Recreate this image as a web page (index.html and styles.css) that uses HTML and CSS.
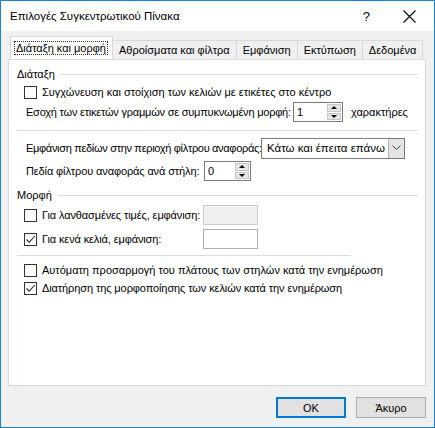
FILE: index.html
```html
<!DOCTYPE html>
<html lang="el">
<head>
  <meta charset="UTF-8" />
  <title>Επιλογές Συγκεντρωτικού Πίνακα</title>
  <link rel="stylesheet" href="styles.css">
</head>
<body>
  <div class="dialog">
    <div class="titlebar">
      <span class="title">Επιλογές Συγκεντρωτικού Πίνακα</span>
      <span class="help">?</span>
      <svg class="close" width="13" height="13" viewBox="0 0 13 13">
        <path d="M0.5 0.5 L12.5 12.5 M12.5 0.5 L0.5 12.5" stroke="#000" stroke-width="1.1" fill="none"/>
      </svg>
    </div>

    <div class="content">
      <div class="tabs">
        <div class="tab active"><span class="focus">Διάταξη και μορφή</span></div>
        <div class="tab">Αθροίσματα και φίλτρα</div>
        <div class="tab">Εμφάνιση</div>
        <div class="tab">Εκτύπωση</div>
        <div class="tab">Δεδομένα</div>
      </div>

      <div class="panel">
        <div class="group-title">Διάταξη</div>

        <label class="check-row">
          <span class="box"></span>
          <span>Συγχώνευση και στοίχιση των κελιών με ετικέτες στο κέντρο</span>
        </label>

        <div class="row">
          <span class="lbl lbl-indent">Εσοχή των ετικετών γραμμών σε συμπυκνωμένη μορφή:</span>
          <div class="spin">
            <span class="spin-value">1</span>
            <div class="spin-btns">
              <span class="arrow-up"></span>
              <span class="arrow-down"></span>
            </div>
          </div>
          <span class="after">χαρακτήρες</span>
        </div>

        <div class="sep"></div>

        <div class="row row-filter">
          <span class="lbl lbl-filter">Εμφάνιση πεδίων στην περιοχή φίλτρου αναφοράς:</span>
          <div class="select">
            <span class="select-value">Κάτω και έπειτα επάνω</span>
            <span class="select-btn">
              <svg width="9" height="6" viewBox="0 0 9 6"><path d="M0.5 0.5 L4.5 4.5 L8.5 0.5" stroke="#444" fill="none"/></svg>
            </span>
          </div>
        </div>

        <div class="row row-columns">
          <span class="lbl lbl-columns">Πεδία φίλτρου αναφοράς ανά στήλη:</span>
          <div class="spin spin-short">
            <span class="spin-value">0</span>
            <div class="spin-btns">
              <span class="arrow-up"></span>
              <span class="arrow-down"></span>
            </div>
          </div>
        </div>

        <div class="group-title group-format">Μορφή</div>

        <div class="row row-check">
          <label class="check">
            <span class="box"></span>
            <span class="lbl-check">Για λανθασμένες τιμές, εμφάνιση:</span>
          </label>
          <span class="textbox disabled"></span>
        </div>

        <div class="row row-check row-empty">
          <label class="check">
            <span class="box">
              <svg width="11" height="11" viewBox="0 0 11 11"><path d="M1.5 5.5 L4.2 8.3 L9.8 2" stroke="#222" stroke-width="1.1" fill="none"/></svg>
            </span>
            <span class="lbl-check">Για κενά κελιά, εμφάνιση:</span>
          </label>
          <span class="textbox"></span>
        </div>

        <div class="sep sep-short"></div>

        <label class="check-row check-auto">
          <span class="box"></span>
          <span>Αυτόματη προσαρμογή του πλάτους των στηλών κατά την ενημέρωση</span>
        </label>
        <label class="check-row">
          <span class="box">
            <svg width="11" height="11" viewBox="0 0 11 11"><path d="M1.5 5.5 L4.2 8.3 L9.8 2" stroke="#222" stroke-width="1.1" fill="none"/></svg>
          </span>
          <span class="tight">Διατήρηση της μορφοποίησης των κελιών κατά την ενημέρωση</span>
        </label>
      </div>

      <div class="buttons">
        <button class="btn btn-default">OK</button>
        <button class="btn">Άκυρο</button>
      </div>
    </div>
  </div>
</body>
</html>
```

FILE: styles.css
```css
body {
  margin: 0;
  font-family: "Liberation Sans", Arial, sans-serif;
  font-size: 11px;
  color: #000;
}
.dialog {
  width: 435px;
  height: 428px;
  box-sizing: border-box;
  border: 1px solid #1883d7;
  background-color: #f0f0f0;
  display: flex;
  flex-direction: column;
}
.titlebar {
  height: 30px;
  background-color: #fff;
  display: flex;
  align-items: center;
  padding-left: 9px;
}
.title {
  flex: 1;
  font-size: 11.5px;
}
.help {
  font-size: 13px;
  margin-right: 33px;
}
.close {
  margin-right: 18px;
}
.content {
  flex: 1;
  padding: 6px 8px 0 7px;
}

/* tab strip */
.tabs {
  display: flex;
  align-items: flex-end;
  height: 22px;
  padding-left: 2px;
  position: relative;
  z-index: 1;
  white-space: nowrap;
}
.tab {
  height: 18px;
  line-height: 18px;
  padding: 0 6px;
  border: 1px solid #d9d9d9;
  border-bottom: none;
  border-left: none;
  background-color: #f0f0f0;
}
.tab.active {
  height: 22px;
  line-height: 22px;
  border-left: 1px solid #d9d9d9;
  background-color: #fff;
  padding: 0 4px 0 3px;
}
.focus {
  border: 1px dotted #333;
  padding: 0 1px;
  line-height: 12px;
  display: inline-block;
}

.panel {
  height: 327px;
  box-sizing: border-box;
  background-color: #fff;
  border: 1px solid #d9d9d9;
  padding: 5px 7px 0 8px;
  white-space: nowrap;
}
.group-title {
  height: 18px;
  display: flex;
  align-items: center;
}
.group-title::after {
  content: "";
  flex: 1;
  height: 1px;
  background-color: #dcdcdc;
  margin-left: 6px;
}
.group-format {
  margin-top: 4px;
}
.sep {
  height: 1px;
  background-color: #dcdcdc;
  margin-top: 7px;
}
.sep-short {
  width: 334px;
  margin-top: 5px;
}

/* checkboxes */
.check-row,
.check {
  display: flex;
  align-items: center;
}
.check-row {
  height: 18px;
  padding-left: 7px;
}
.check-auto {
  margin-top: 5px;
}
.check {
  padding-left: 7px;
}
.box {
  width: 11px;
  height: 11px;
  border: 1px solid #333;
  background-color: #fff;
  margin-right: 5px;
  display: flex;
}
.tight {
  letter-spacing: -0.1px;
}

/* label + control rows */
.row {
  height: 22px;
  display: flex;
  align-items: center;
  padding-left: 9px;
}
.row-filter {
  margin-top: 6px;
}
.row-columns {
  margin-top: 1px;
}
.row-check {
  padding-left: 0;
}
.row-empty {
  margin-top: 2px;
}
.lbl-indent {
  width: 267px;
  letter-spacing: -0.22px;
}
.lbl-filter {
  width: 235px;
  letter-spacing: -0.32px;
}
.lbl-columns {
  width: 178px;
  letter-spacing: -0.12px;
}
.lbl-check {
  width: 161px;
  letter-spacing: -0.12px;
}
.after {
  margin-left: 8px;
}

.spin {
  width: 50px;
  height: 20px;
  box-sizing: border-box;
  border: 1px solid #7a7a7a;
  display: flex;
}
.spin-short {
  width: 47px;
}
.spin-value {
  flex: 1;
  padding-left: 3px;
  line-height: 18px;
}
.spin-btns {
  width: 14px;
  display: flex;
  flex-direction: column;
  gap: 1px;
  padding: 1px 1px 1px 0;
}
.spin-btns span {
  flex: 1;
  background-color: #e5e5e5;
  border: 1px solid #c6c6c6;
  display: flex;
  align-items: center;
  justify-content: center;
}
.arrow-up::before,
.arrow-down::before {
  content: "";
  border-left: 3px solid transparent;
  border-right: 3px solid transparent;
}
.arrow-up::before {
  border-bottom: 3px solid #000;
}
.arrow-down::before {
  border-top: 3px solid #000;
}

.select {
  width: 144px;
  height: 21px;
  box-sizing: border-box;
  border: 1px solid #7a7a7a;
  display: flex;
}
.select-value {
  flex: 1;
  font-size: 11.5px;
  line-height: 19px;
  padding-left: 5px;
  overflow: hidden;
}
.select-btn {
  width: 15px;
  background-color: #e5e5e5;
  border-left: 1px solid #adadad;
  display: flex;
  align-items: center;
  justify-content: center;
}

.textbox {
  width: 55px;
  height: 20px;
  box-sizing: border-box;
  border: 1px solid #adadad;
  background-color: #fff;
}
.textbox.disabled {
  background-color: #f0f0f0;
  border-color: #cccccc;
}

/* dialog buttons */
.buttons {
  display: flex;
  justify-content: flex-end;
  gap: 10px;
  margin-top: 11px;
}
.btn {
  width: 70px;
  height: 21px;
  font-family: inherit;
  font-size: 11px;
  color: #000;
  background-color: #e1e1e1;
  border: 1px solid #adadad;
  padding: 0;
}
.btn-default {
  border: 2px solid #0078d7;
}
```
